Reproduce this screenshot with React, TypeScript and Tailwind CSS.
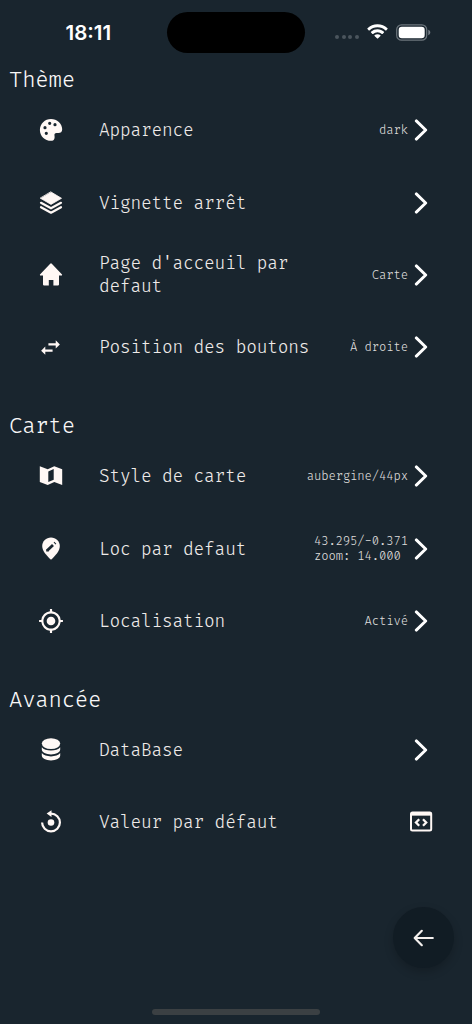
import type { ReactNode } from 'react';
import { MdMyLocation, MdSwapHoriz } from 'react-icons/md';

const PaletteIcon = () => (
  <svg width="24" height="24" viewBox="0 0 24 24" fill="currentColor" fillRule="evenodd">
    <path d="M12 .9c6 0 11.2 4.400 11.2 10.400 0 3.400-2.400 4.100-4.900 3.700-2.300-.3-3.100.7-2.800 2.700.4 2.600-.2 5.100-3.400 5.100C5.800 22.800.9 18 .9 11.900S5.900.9 12 .9zM6 8.100a1.600 1.600 0 1 0 0 3.200 1.600 1.600 0 1 0 0-3.200zM10.700 3.700a1.600 1.600 0 1 0 0 3.200 1.600 1.600 0 1 0 0-3.200zM16 5.100a1.600 1.600 0 1 0 0 3.200 1.600 1.600 0 1 0 0-3.200zM7.300 13.700a1.600 1.600 0 1 0 0 3.200 1.600 1.600 0 1 0 0-3.200z" />
  </svg>
);

const LayersIcon = () => (
  <svg width="24" height="24" viewBox="0 0 24 24" fill="none" stroke="currentColor" strokeLinejoin="round" strokeLinecap="round">
    <path d="M12 1 22.500 7.300 12 13.400 1.500 7.300z" fill="currentColor" strokeWidth=".8" />
    <path d="M2 11.800 12 17.300l10-5.500M2 16.200l10 5.500 10-5.500" strokeWidth="2.200" />
  </svg>
);

const HomeIcon = () => (
  <svg width="24" height="24" viewBox="0 0 24 24" fill="currentColor">
    <path d="M11.2.7a1.100 1.100 0 0 1 1.600 0L22.800 11.200c.6.700.3 1.300-.5 1.300H20V21.600a.8.8 0 0 1-.8.8h-4.800v-5.400H9.800v5.400H4.800a.8.800 0 0 1-.8-.8v-9.100H1.700c-.8 0-1.100-.6-.5-1.300z" />
  </svg>
);

const MapIcon = () => (
  <svg width="24" height="24" viewBox="0 0 24 24" fill="currentColor" fillRule="evenodd">
    <path d="M.8 2.2 8.700 5.300 15.300 2.200 23.200 5.200V20.900L15.300 17.900 8.700 20.900.8 17.900zM9.300 7.400V18.100L14.700 15.700V5z" />
  </svg>
);

const EditPinIcon = () => (
  <svg width="24" height="24" viewBox="0 0 24 24" fill="none">
    <path d="M12 .4c4.900 0 8.800 3.800 8.800 8.600 0 4.900-4.300 9.600-8.800 13.700C7.500 18.600 3.200 13.900 3.200 9 3.200 4.200 7.100.4 12 .4z" fill="currentColor" />
    <path d="m8.200 13.500 5.800-5.600M15.600 6.400l.7-.7" stroke="#19252e" strokeWidth="2.800" />
    <path d="M7.200 11.900v2.600h2.600z" fill="#19252e" />
  </svg>
);

const DatabaseIcon = () => (
  <svg width="24" height="24" viewBox="0 0 24 24" fill="currentColor">
    <ellipse cx="12" cy="5.600" rx="9.200" ry="5.400" />
    <path d="M2.800 9.300c1.700 2.200 5.200 3.300 9.200 3.300s7.500-1.100 9.200-3.300v2.200c0 2.700-4.200 4.900-9.200 4.900s-9.200-2.200-9.200-4.900z" />
    <path d="M2.800 15.100c1.700 2.200 5.200 3.300 9.200 3.300s7.500-1.100 9.200-3.300v2.400c0 2.700-4.200 4.900-9.200 4.900s-9.200-2.200-9.200-4.900z" />
  </svg>
);

const ResetIcon = () => (
  <svg width="24" height="24" viewBox="0 0 24 24" fill="none">
    <path d="M3.100 12.500A8.900 8.900 0 1 0 12 3.600" stroke="currentColor" strokeWidth="2.200" />
    <path d="M12.500.2v6.800L7.600 3.600z" fill="currentColor" />
    <circle cx="12" cy="12.500" r="3.300" fill="currentColor" />
  </svg>
);

const CodeWindowIcon = () => (
  <svg width="24" height="24" viewBox="0 0 24 24" fill="none" stroke="currentColor">
    <rect x="2" y="2.500" width="20.200" height="18" rx="1.500" strokeWidth="2" />
    <path d="M2 3.900h20.200" strokeWidth="3.500" />
    <path d="M10.200 9.300 7 12.500l3.200 3.200M14 9.300l3.200 3.200-3.200 3.200" strokeWidth="2.300" />
  </svg>
);

const ChevronIcon = () => (
  <svg width="14" height="22" viewBox="0 0 14 22" fill="none" className="shrink-0">
    <path d="M2.300 1.900 11.700 11 2.300 20.100" stroke="white" strokeWidth="2.900" strokeLinecap="round" strokeLinejoin="round" />
  </svg>
);

type Row = {
  icon: ReactNode;
  label: string;
  value?: string;
  action?: ReactNode;
};

const sections: { title: string; rows: Row[] }[] = [
  {
    title: 'Thème',
    rows: [
      { icon: <PaletteIcon />, label: 'Apparence', value: 'dark' },
      { icon: <LayersIcon />, label: 'Vignette arrêt' },
      { icon: <HomeIcon />, label: "Page d'acceuil par defaut", value: 'Carte' },
      { icon: <MdSwapHoriz size={25} />, label: 'Position des boutons', value: 'À droite' },
    ],
  },
  {
    title: 'Carte',
    rows: [
      { icon: <MapIcon />, label: 'Style de carte', value: 'aubergine/44px' },
      { icon: <EditPinIcon />, label: 'Loc par defaut', value: '43.295/-0.371\nzoom: 14.000' },
      { icon: <MdMyLocation size={26} />, label: 'Localisation', value: 'Activé' },
    ],
  },
  {
    title: 'Avancée',
    rows: [
      { icon: <DatabaseIcon />, label: 'DataBase' },
      { icon: <ResetIcon />, label: 'Valeur par défaut', action: <CodeWindowIcon /> },
    ],
  },
];

function StatusBar() {
  return (
    <div className="grid h-[65px] grid-cols-[167px_138px_167px] pt-3">
      <div className="pl-[65.500px] pt-[7px] font-['Inter',sans-serif] text-[20.500px] font-semibold leading-7 text-white">
        18:11
      </div>
      <div className="h-[41px] rounded-full bg-black" />
      <div className="flex h-10 items-center pl-[30px]">
        <div className="mt-[10px] flex gap-[2.600px]">
          {[0, 1, 2, 3].map((i) => (
            <span key={i} className="size-1 rounded-full bg-[#4b555d]" />
          ))}
        </div>
        <svg width="21" height="16" viewBox="0 0 22 16" className="ml-[8px]" fill="white">
          <path d="M11 0c4 0 7.700 1.500 10.500 4.200.2.200.2.500 0 .7l-1.400 1.400c-.2.200-.5.200-.7 0A12 12 0 0 0 11 3a12 12 0 0 0-8.400 3.300c-.2.200-.5.200-.7 0L.5 4.900c-.2-.2-.2-.5 0-.7A15 15 0 0 1 11 0z" />
          <path d="M11 5.200c2.600 0 5 1 6.800 2.600.2.200.2.500 0 .7l-1.500 1.500c-.2.200-.5.200-.7 0A7 7 0 0 0 11 8.200 7 7 0 0 0 6.400 10c-.2.200-.5.200-.7 0L4.200 8.500c-.2-.2-.2-.5 0-.7A10 10 0 0 1 11 5.200z" />
          <path d="M11 10.300c1.200 0 2.300.4 3.100 1.100.2.200.2.500 0 .7l-2.700 2.800c-.2.200-.5.200-.7 0L7.900 12.100c-.2-.2-.2-.5 0-.7.800-.7 1.900-1.100 3.100-1.100z" />
        </svg>
        <svg width="35" height="17" viewBox="0 0 35 17" className="ml-2" fill="none">
          <rect x=".7" y=".8" width="30" height="15.400" rx="4.800" stroke="#6c757c" strokeWidth="1.200" />
          <rect x="2.700" y="2.700" width="26" height="11.600" rx="3.200" fill="white" />
          <path d="M32.300 5.800v5.400c1.200-.5 2-1.500 2-2.700s-.8-2.200-2-2.700z" fill="#78818a" />
        </svg>
      </div>
    </div>
  );
}

function SettingRow({ icon, label, value, action }: Row) {
  return (
    <div className="flex h-[72.400px] items-center pl-[36.500px] pr-[44px]">
      <div className="flex w-[28px] shrink-0 justify-center text-[#fff8f5]">{icon}</div>
      <div className="ml-[34.500px] min-w-0 flex-1 pt-px text-[17.450px] font-light leading-[23px] tracking-[-0.220px] text-[#efebe9]">
        <p className="max-w-[216px]">{label}</p>
      </div>
      <div className="flex shrink-0 items-center gap-[6px]">
        {value && (
          <span className="whitespace-pre pt-px text-[12px] font-light leading-[15.500px] tracking-[-0.150px] text-[#dedcdb]">{value}</span>
        )}
        {action ? <div className="-mr-[5px] text-[#fff8f5]">{action}</div> : <ChevronIcon />}
      </div>
    </div>
  );
}

export default function App() {
  return (
    <div className="relative h-[1024px] w-[472px] overflow-hidden bg-[#19252e] font-['Fira_Code','DejaVu_Sans_Mono',monospace]">
      <StatusBar />
      <div className="flex flex-col gap-[27.500px]">
        {sections.map((section) => (
          <section key={section.title}>
            <h2 className="pl-[9px] pt-[2px] text-[21.800px] font-light leading-[27px] tracking-[-0.250px] text-[#f8f7f7]">{section.title}</h2>
            {section.rows.map((row) => (
              <SettingRow key={row.label} {...row} />
            ))}
          </section>
        ))}
      </div>

      {/* floating back button */}
      <button className="absolute bottom-[56px] right-[18px] flex size-[61px] items-center justify-center rounded-full bg-[#111c24] shadow-[0_4px_10px_rgba(0,0,0,0.200)]">
        <svg width="22" height="18" viewBox="0 0 22 18" fill="none" stroke="#f4f0ee" strokeWidth="2.200" strokeLinecap="round" strokeLinejoin="round">
          <path d="M8.800 1.800 1.700 9l7.100 7.200M1.900 9h17.900" />
        </svg>
      </button>

      {/* home indicator */}
      <div className="absolute bottom-[9px] left-[152px] h-[6px] w-[168px] rounded-full bg-[#3b4043]" />
    </div>
  );
}
